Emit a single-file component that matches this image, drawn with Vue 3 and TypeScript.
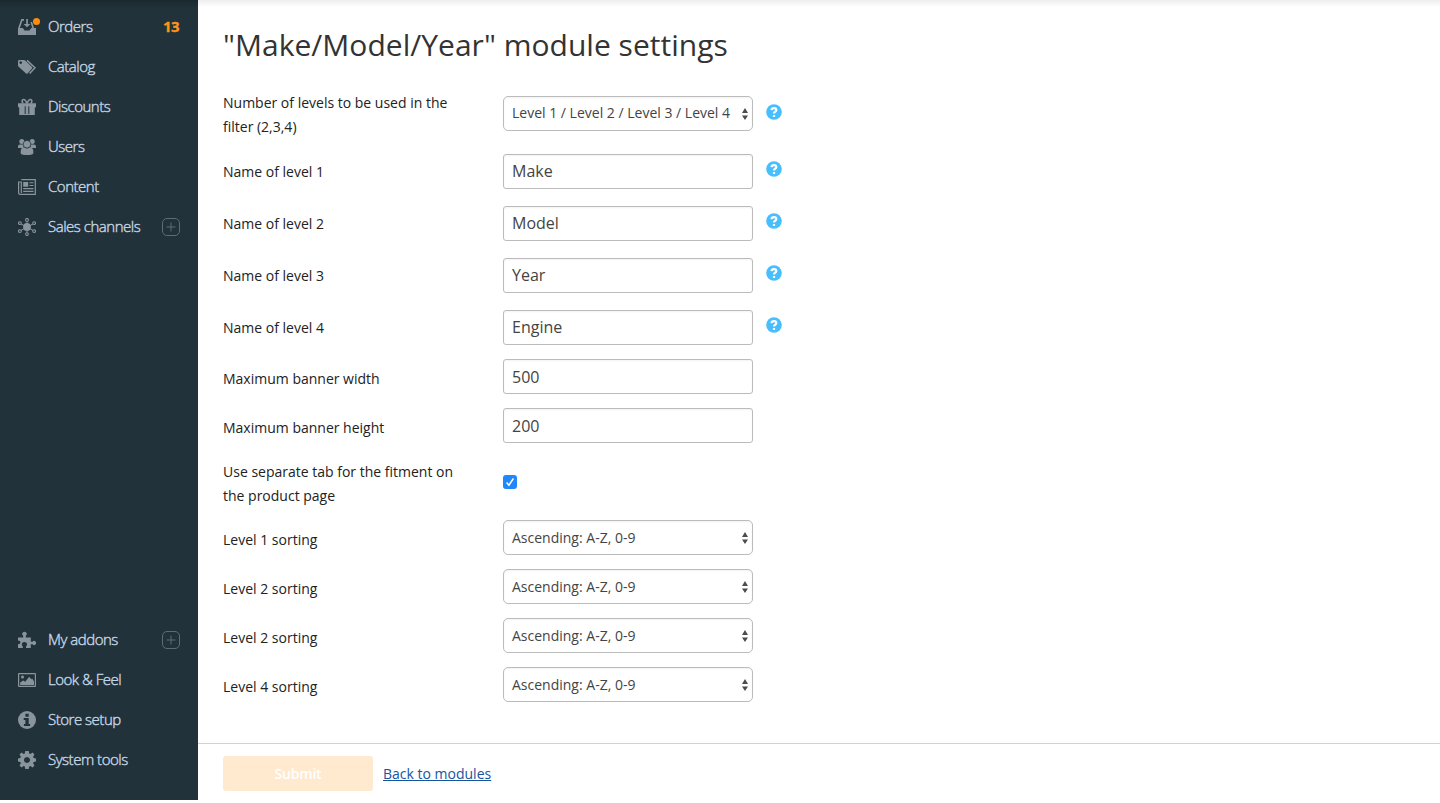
<script setup lang="ts">
import { ref } from 'vue'

interface NavItem { id: string; label: string; count?: number; plus?: boolean }
interface Row { label: string; kind: 'select' | 'input' | 'check'; value: string; help?: boolean; size: string }

const top: NavItem[] = [
  { id: 'orders', label: 'Orders', count: 13 },
  { id: 'catalog', label: 'Catalog' },
  { id: 'discounts', label: 'Discounts' },
  { id: 'users', label: 'Users' },
  { id: 'content', label: 'Content' },
  { id: 'channels', label: 'Sales channels', plus: true },
]
const bottom: NavItem[] = [
  { id: 'addons', label: 'My addons', plus: true },
  { id: 'look', label: 'Look & Feel' },
  { id: 'setup', label: 'Store setup' },
  { id: 'tools', label: 'System tools' },
]
const groups = [top, bottom]
const sorting = 'Ascending: A-Z, 0-9'
const rows = ref<Row[]>([
  { label: 'Number of levels to be used in the filter (2,3,4)', kind: 'select', value: 'Level 1 / Level 2 / Level 3 / Level 4', help: true, size: 'first' },
  { label: 'Name of level 1', kind: 'input', value: 'Make', help: true, size: 'tall' },
  { label: 'Name of level 2', kind: 'input', value: 'Model', help: true, size: 'tall' },
  { label: 'Name of level 3', kind: 'input', value: 'Year', help: true, size: 'tall' },
  { label: 'Name of level 4', kind: 'input', value: 'Engine', help: true, size: 'last-name' },
  { label: 'Maximum banner width', kind: 'input', value: '500', size: 'plain' },
  { label: 'Maximum banner height', kind: 'input', value: '200', size: 'plain' },
  { label: 'Use separate tab for the fitment on the product page', kind: 'check', value: '', size: 'double' },
  { label: 'Level 1 sorting', kind: 'select', value: sorting, size: 'plain' },
  { label: 'Level 2 sorting', kind: 'select', value: sorting, size: 'plain' },
  { label: 'Level 2 sorting', kind: 'select', value: sorting, size: 'plain' },
  { label: 'Level 4 sorting', kind: 'select', value: sorting, size: 'plain' },
])
</script>

<template>
  <div class="page">
    <aside class="sidebar">
      <nav v-for="(items, g) in groups" :key="g">
        <a v-for="item in items" :key="item.id" class="nav-item">
          <svg class="nav-icon" viewBox="0 0 18 18" width="18" height="18">
            <template v-if="item.id === 'orders'">
              <path d="M0 10h4.800l1.700 2.500h5L13.200 10H18v7H0z" />
              <path d="M6 1.800H3.900L1 10M13.200 4l2 6" fill="none" stroke="#8a949d" stroke-width="1.700" />
              <path d="M8.200 1h1.700v5h2.500L9 9.300 5.600 6h2.600z" />
            </template>
            <template v-else-if="item.id === 'catalog'">
              <path fill-rule="evenodd" d="M0 3.200Q0 2 1.200 2H6q.7 0 1.200.5l6.800 6.600q.7.7 0 1.400l-4.500 4.900q-.7.7-1.400 0L.6 8.700Q0 8.100 0 7.500zM2.700 3.200a1.350 1.350 0 1 0 .01 0z" />
              <path d="M9 2.400l8 7.400-5.400 5.800" fill="none" stroke="#8a949d" stroke-width="1.500" />
            </template>
            <template v-else-if="item.id === 'discounts'">
              <path d="M0 5.300h18v4H0zM1.200 8h15.600v9H1.200z" />
              <path d="M7.200 8.300v7.700M10.800 8.300v7.700" stroke="#22323a" />
              <path d="M8.800 5.500Q7.500 1 5.300 1.500T5 5.500m4.200 0q1.300-4.500 3.500-4T13 5.500" fill="none" stroke="#8a949d" stroke-width="1.600" />
            </template>
            <template v-else-if="item.id === 'users'">
              <circle cx="3.800" cy="3.500" r="2.500" /><circle cx="14.200" cy="3.500" r="2.500" />
              <path d="M0 10V8.500Q0 6.500 2 6.500h3.500V10zM18 10V8.500q0-2-2-2h-3.500V10z" />
              <circle cx="9" cy="6.200" r="3.800" stroke="#22323a" stroke-width=".7" />
              <path d="M2.700 15.500v-2.300q0-3.600 3.500-3.600Q9 11.600 11.800 9.600q3.500 0 3.500 3.600v2.300Q14 17 9 17t-6.300-1.500z" />
            </template>
            <template v-else-if="item.id === 'content'">
              <path d="M3.300 1.600h14v14.800H2.200q-1.600 0-1.600-1.600V4h2.700v11" fill="none" stroke="#8a949d" stroke-width="1.200" />
              <path d="M5.200 4h5v4.700h-5zM11.500 4.200h4v1.100h-4zM11.500 7h4v1.100h-4zM5.200 10h10.300v1.200H5.200zM5.200 12.800h10.300V14H5.200z" />
            </template>
            <template v-else-if="item.id === 'channels'">
              <path d="M9 9V2M9 9v7M9 9L2 5.500M9 9l7-3.500M9 9l-7 4M9 9l7 4" stroke="#8a949d" />
              <circle cx="9" cy="9" r="3.900" />
              <g fill="#22323a" stroke="#8a949d" stroke-width="1.100">
                <circle cx="9" cy="1.900" r="1.400" /><circle cx="9" cy="16.100" r="1.400" />
                <circle cx="1.900" cy="5.100" r="1.400" /><circle cx="16.100" cy="5.100" r="1.400" />
                <circle cx="1.900" cy="13.100" r="1.400" /><circle cx="16.100" cy="13.100" r="1.400" />
              </g>
            </template>
            <template v-else-if="item.id === 'addons'">
              <path d="M0 6.500h5.200V4.800a2.200 2.200 0 1 1 2.600 0v1.700h5v4.200h1.800a2 2 0 1 1 0 2.600h-1.800V17H8v-1.600q1-.7 1-1.900a2.600 2.600 0 0 0-5.200 0q0 1.200 1 1.900V17H0v-3.800q2.500 0 2.500-1.900T0 9.500z" />
            </template>
            <template v-else-if="item.id === 'look'">
              <rect x=".6" y="2.600" width="16.800" height="12.800" rx=".5" fill="none" stroke="#8a949d" stroke-width="1.200" />
              <circle cx="4.500" cy="6" r="1.500" /><path d="M2.200 14v-2.500l3-2 2 1.200 4-4.900 2 2.500 1-.8 1.800 3V14z" />
            </template>
            <template v-else-if="item.id === 'setup'">
              <circle cx="9" cy="9" r="9" />
              <path d="M7.400 2.800h3.300v3H7.400zM5.700 7h5v6h1.400v2H5.900v-2h1.500V9H5.700z" fill="#22323a" />
            </template>
            <template v-else>
              <path fill-rule="evenodd" d="M7.300 0h3.400l.5 2.500 1.200.5 2.100-1.400 2 2-1.400 2.200.5 1.200 2.400.5v3l-2.400.5-.5 1.200 1.400 2.200-2 2-2.100-1.400-1.200.5-.5 2.500H7.300l-.5-2.500-1.200-.5-2.100 1.400-2-2 1.400-2.200-.5-1.200L0 10.500v-3L2.400 7l.5-1.200L1.500 3.600l2-2L5.600 3l1.200-.5zM9 6a3 3 0 1 0 .01 0z" />
            </template>
          </svg>
          <i v-if="item.count" class="dot"></i>
          <span class="nav-label">{{ item.label }}</span>
          <b v-if="item.count" class="count">{{ item.count }}</b>
          <svg v-if="item.plus" class="plus" width="18" height="18" viewBox="0 0 18 18">
            <rect x=".5" y=".5" width="17" height="17" rx="4.500" /><path d="M4.500 9h9M9 4.500v9" />
          </svg>
        </a>
      </nav>
    </aside>
    <main class="main">
      <h1><span>"Make/Model/Year" module settings</span></h1>
      <form class="form" @submit.prevent>
        <div v-for="(row, i) in rows" :key="i" class="row" :class="row.size">
          <div class="label">{{ row.label }}</div>
          <div v-if="row.kind === 'select'" class="field select">
            <span>{{ row.value }}</span>
            <svg width="6" height="12" viewBox="0 0 6 12"><path d="M0 5l3-5 3 5zM0 7.500h6l-3 4.500z" /></svg>
          </div>
          <input v-else-if="row.kind === 'input'" v-model="row.value" class="field" type="text">
          <div v-else class="check">
            <svg width="14" height="14" viewBox="0 0 14 14"><path d="M3.600 7.600l2.300 2.600 4.500-6.700" /></svg>
          </div>
          <svg v-if="row.help" class="help" width="16" height="16" viewBox="0 0 16 16">
            <circle cx="8" cy="8" r="7.800" />
            <path d="M5.500 6.100Q5.700 4.100 8 4.100t2.300 1.900q0 1.100-1.200 1.800Q8 8.400 8 9.600" /><path d="M8 11v2" />
          </svg>
        </div>
      </form>
      <footer class="footer">
        <button class="submit" disabled>Submit</button>
        <a class="back">Back to modules</a>
      </footer>
    </main>
  </div>
</template>

<style>
body { margin: 0; background: #fff; overflow: hidden; }
</style>

<style scoped>
* { box-sizing: border-box; }
.page { display: flex; height: 800px; font: 14px/24px "Open Sans", "Noto Sans", sans-serif; color: #222; }
.sidebar { width: 198px; padding: 7px 18px 20px; display: flex; flex-direction: column; justify-content: space-between; background: linear-gradient(#1a272e, #22323a 8px); }
.nav-item { position: relative; height: 40px; display: flex; align-items: center; color: #c3d5e4; }
.nav-icon { fill: #8a949d; flex: none; margin-right: 12px; }
.nav-label { flex: 1; padding-bottom: 2px; font-size: 15px; font-weight: 300; letter-spacing: -.48px; white-space: nowrap; -webkit-text-stroke: .4px #c3d5e4; }
.dot { position: absolute; left: 15px; top: 11px; width: 7px; height: 7px; border-radius: 50%; background: #ff8c0a; }
.count { padding: 0 1px 2px 0; color: #ff9419; font-size: 15px; letter-spacing: -.6px; -webkit-text-stroke: .3px #ff9419; }
.plus { fill: none; stroke: #5e6c75; }
.main { flex: 1; display: flex; flex-direction: column; background: linear-gradient(#ededed, #fff 7px); }
h1 { margin: 0; padding: 25px 25px 0; height: 96px; font-size: 30px; line-height: 40px; font-weight: 400; color: #333; letter-spacing: .02px; white-space: nowrap; }
.form { padding-left: 25px; flex: 1; }
.row { display: flex; align-items: flex-start; }
.first { height: 58px; }
.tall { height: 52px; }
.last-name, .plain { height: 49px; }
.double { height: 63px; }
.label { width: 240px; margin: 6px 40px 0 0; }
.first .label { margin-top: -5px; }
.double .label { margin-top: 3px; }
.plain .label { margin-top: 8px; }
.field { width: 250px; height: 35px; padding: 0 8px; border: 1px solid #bbb; border-radius: 3px; font: 16px "Open Sans", sans-serif; color: #444; background: #fff; box-shadow: inset 0 1px 2px #0000000d; outline: none; }
.tall .field, .last-name .field { padding-bottom: 2px; }
.select { display: flex; align-items: center; justify-content: space-between; font-size: 14px; padding-right: 4px; border-radius: 5px; white-space: nowrap; }
.first .select span { padding-bottom: 2px; }
.select svg { fill: #4c4c4c; flex: none; }
.help { margin: 7px 0 0 13px; fill: #47bfff; }
.first .help { margin-top: 8px; }
.help path { fill: none; stroke: #fff; stroke-width: 2.200; }
.check { width: 14px; height: 14px; margin-top: 18px; border-radius: 3px; background: #2088f8; }
.check svg { display: block; fill: none; stroke: #fff; stroke-width: 1.500; }
.footer { height: 57px; border-top: 1px solid #d2d2d2; display: flex; align-items: center; padding: 3px 0 0 25px; }
.submit { width: 150px; height: 35px; margin-right: 10px; border: 0; border-radius: 3px; background: #ffe9cf; color: #fff; font: 600 14px "Open Sans", sans-serif; letter-spacing: -.2px; }
.back { color: #1654a0; text-decoration: underline; }
</style>
